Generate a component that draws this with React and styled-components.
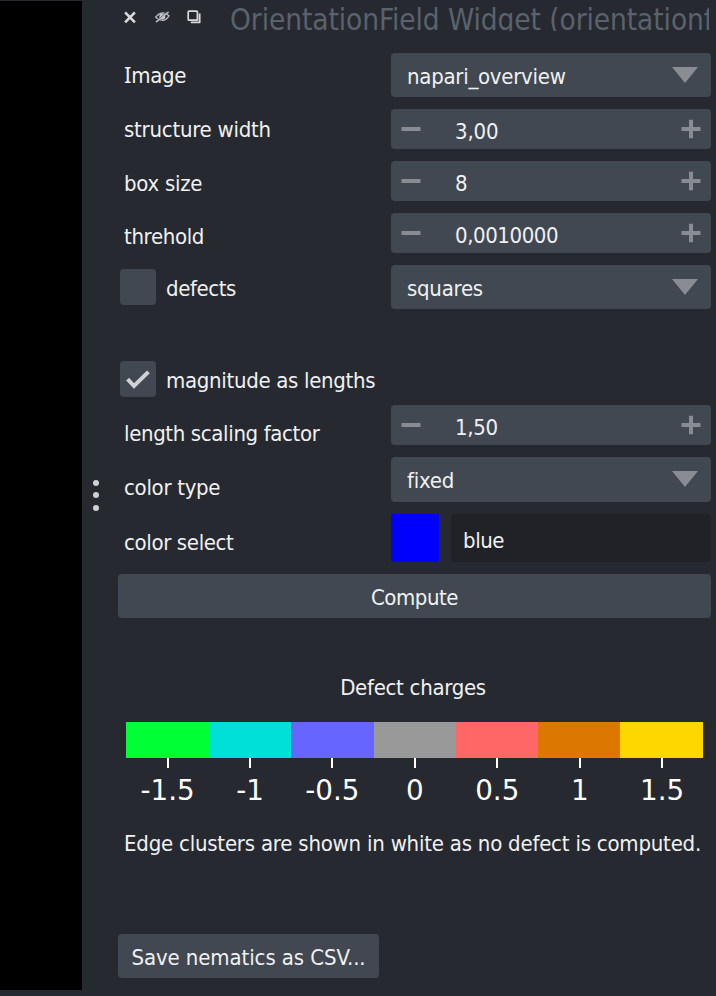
import React from 'react';
import styled, { createGlobalStyle } from 'styled-components';

const Global = createGlobalStyle`
  * { box-sizing: border-box; }
  body { margin: 0; background: #262930; overflow: hidden; }
`;

const Window = styled.div`
  display: flex;
  width: 716px;
  height: 996px;
  background: #262930;
  color: #f0f1f2;
  font-family: "DejaVu Sans Condensed", "DejaVu Sans", sans-serif;
  font-stretch: condensed;
  font-size: 22px;
  line-height: 32px;
  white-space: nowrap;
`;

const Canvas = styled.div`
  flex: 0 0 82px;
  margin: 1px 0 6px;
  background: #000;
`;

const Handle = styled.div`
  flex: 0 0 36px;
  padding: 479px 0 0 10px;
  svg { display: block; }
`;

const Dock = styled.main`
  width: 593px;
  display: flex;
  flex-direction: column;
`;

const TitleBar = styled.header`
  display: flex;
  height: 53px;
  padding-left: 5px;
  flex-shrink: 0;
`;

const TitleButtons = styled.div`
  display: flex;
  gap: 16px;
  padding-top: 9px;
  width: 107px;
  flex-shrink: 0;
  svg { display: block; }
`;

const Title = styled.h1`
  margin: 0;
  width: 479px;
  height: 31px;
  overflow: hidden;
  color: #5a626c;
  font-size: 29.5px;
  font-weight: 400;
  letter-spacing: -0.08px;
  line-height: 40px;
`;

const Form = styled.div`
  display: flex;
  flex-direction: column;
  gap: 12px;
  margin-bottom: ${(p) => p.$after || 0}px;
`;

const FormRow = styled.div`
  display: grid;
  grid-template-columns: 273px 320px;
  grid-template-rows: 100%;
  height: ${(p) => p.$h}px;
`;

const Text = styled.span`
  display: block;
  height: 30px;
  margin-top: ${(p) => p.$top || 0}px;
  letter-spacing: ${(p) => p.$ls || 0}px;
`;

const Label = styled(Text).attrs({ as: 'label' })`
  padding-left: 6px;
`;

const SerifCap = styled.span`
  font-family: "Noto Sans", sans-serif;
  line-height: 0;
`;

const Check = styled.div`
  display: flex;
  gap: 10px;
  padding-left: 2px;
`;

const CheckBox = styled.span`
  display: block;
  width: 36px;
  height: 36px;
  margin-top: ${(p) => p.$top || 0}px;
  border-radius: 4px;
  background: #414851;
  svg { display: block; }
`;

const Field = styled.div`
  display: flex;
  justify-content: space-between;
  border-radius: 4px;
  background: #414851;
`;

const ComboField = styled(Field)`
  padding: 0 13px 0 16px;
  svg { display: block; margin-top: 14px; }
`;

const SpinField = styled(Field)`
  padding: 0 10px;
  svg { display: block; margin-top: 10px; }
`;

const SpinValue = styled(Text)`
  flex: 1;
  padding-left: 34px;
`;

const ColorField = styled.div`
  display: flex;
  gap: 12px;
`;

const Swatch = styled.div`
  width: 48px;
  border-radius: 2px;
  background: #00f;
`;

const LineEdit = styled.div`
  flex: 1;
  padding-left: 12px;
  border-radius: 4px;
  background: #212227;
`;

const Button = styled.button`
  flex-shrink: 0;
  width: ${(p) => p.$w}px;
  height: 44px;
  padding: 0;
  border: 0;
  border-radius: 4px;
  background: #414851;
  color: inherit;
  font: inherit;
  display: flex;
  justify-content: center;
  align-items: flex-start;
`;

const Legend = styled.section`
  height: 316px;
  padding-top: 54px;
  display: flex;
  flex-direction: column;
  flex-shrink: 0;
`;

const LegendTitle = styled(Text)`
  text-align: center;
  padding-right: 3px;
`;

const Scale = styled.div`
  display: grid;
  grid-template-columns: 84px 81px 83px 82px 82px 82px 83px;
  margin: 20px 0 0 8px;
`;

const Band = styled.div`
  height: 36px;
  background: ${(p) => p.$c};
`;

const Ticks = styled.div`
  display: grid;
  grid-template-columns: repeat(7, 82.43px);
  height: 50px;
  margin-left: 8.4px;
`;

const Tick = styled.div`
  display: flex;
  flex-direction: column;
  align-items: center;
  color: #fff;
  font-family: "DejaVu Sans", sans-serif;
  font-stretch: normal;
  font-size: 27.78px;
  line-height: 46px;
  &::before {
    content: "";
    width: 2px;
    height: 10px;
    background: #fff;
  }
`;

const Note = styled(Text)`
  padding-left: 6px;
`;

const Arrow = () => (
  <svg width="26" height="16"><path d="M0 0H26L13 16Z" fill="#8a8c93" /></svg>
);
const Minus = () => (
  <svg width="20" height="20"><path d="M.5 8h19v4H.5z" fill="#8a8c93" /></svg>
);
const Plus = () => (
  <svg width="20" height="20"><path d="M.5 8H8V.7h4V8h7.5v4H12v7.3H8V12H.5z" fill="#8a8c93" /></svg>
);

const Combo = ({ top, ls, children }) => (
  <ComboField><Text $top={top} $ls={ls}>{children}</Text><Arrow /></ComboField>
);
const Spin = ({ ls, children }) => (
  <SpinField><Minus /><SpinValue $top={7} $ls={ls}>{children}</SpinValue><Plus /></SpinField>
);

const BANDS = [
  ['-1.5', '#00ff33'], ['-1', '#00e0d8'], ['-0.5', '#6666ff'], ['0', '#999999'],
  ['0.5', '#ff6666'], ['1', '#dc7700'], ['1.5', '#ffd700'],
];

export default function App() {
  return (
    <>
      <Global />
      <Window>
        <Canvas />
        <Handle>
          <svg width="8" height="34" fill="#d0d1d3">
            <circle cx="4" cy="4" r="3" /><circle cx="4" cy="16" r="3" /><circle cx="4" cy="29" r="3" />
          </svg>
        </Handle>
        <Dock>
          <TitleBar>
            <TitleButtons>
              <svg width="16" height="16" fill="none" stroke="#d8d9db" strokeWidth="2.6">
                <path d="M2.1 3.4 11.9 13.4M11.9 3.4 2.1 13.4" />
              </svg>
              <svg width="16" height="16" fill="none" stroke="#b9babe" strokeWidth="1.3">
                <path d="M.6 8.2Q7 .4 14 6.8Q8.4 15.2 .6 8.2Z" />
                <circle cx="7.3" cy="7.6" r="3" fill="#c8c9cc" stroke="none" />
                <path d="M1.2 12.2 12.6 2.6" stroke="#262930" strokeWidth="1" />
                <path d="M1 13.2 13.6 2.8" strokeWidth="1.6" />
              </svg>
              <svg width="16" height="16" fill="none" stroke="#d8d9db" strokeWidth="1.7">
                <rect x="1.2" y="2.2" width="9.2" height="9" rx=".8" />
                <path d="M12.6 4.4V13.4H3.8" strokeWidth="1.9" strokeLinejoin="round" />
              </svg>
            </TitleButtons>
            <Title>OrientationField Widget (orientationfield)</Title>
          </TitleBar>

          <Form $after={52}>
            <FormRow $h={44}>
              <Label $top={7} $ls={-0.3}><SerifCap>I</SerifCap>mage</Label>
              <Combo top={8} ls={-0.27}>napari_overview</Combo>
            </FormRow>
            <FormRow $h={40}>
              <Label $top={5} $ls={-0.25}>structure width</Label>
              <Spin ls={-0.15}>3,00</Spin>
            </FormRow>
            <FormRow $h={40}>
              <Label $top={7} $ls={-0.27}>box size</Label>
              <Spin>8</Spin>
            </FormRow>
            <FormRow $h={40}>
              <Label $top={8} $ls={-0.35}>threhold</Label>
              <Spin ls={-0.43}>0,0010000</Spin>
            </FormRow>
            <FormRow $h={44}>
              <Check><CheckBox $top={4} /><Text $top={8} $ls={-0.41}>defects</Text></Check>
              <Combo top={8} ls={-0.26}>squares</Combo>
            </FormRow>
          </Form>

          <Form $after={8}>
            <FormRow $h={36}>
              <Check>
                <CheckBox>
                  <svg width="36" height="36" fill="none" stroke="#d0d1d3" strokeWidth="4">
                    <path d="M7.6 18.2 14 25 28.4 10.8" />
                  </svg>
                </CheckBox>
                <Text $top={4} $ls={-0.31}>magnitude as lengths</Text>
              </Check>
            </FormRow>
          </Form>

          <Form>
            <FormRow $h={40}>
              <Label $top={13} $ls={-0.36}>length scaling factor</Label>
              <Spin ls={-0.29}>1,50</Spin>
            </FormRow>
            <FormRow $h={45}>
              <Label $top={15} $ls={-0.3}>color type</Label>
              <Combo top={8} ls={-0.22}>fixed</Combo>
            </FormRow>
            <FormRow $h={48}>
              <Label $top={13} $ls={-0.36}>color select</Label>
              <ColorField>
                <Swatch />
                <LineEdit><Text $top={11} $ls={-0.44}>blue</Text></LineEdit>
              </ColorField>
            </FormRow>
            <Button $w={593}><Text $top={8} $ls={-0.46}>Compute</Text></Button>
          </Form>

          <Legend>
            <LegendTitle $ls={-0.3}>Defect charges</LegendTitle>
            <Scale>{BANDS.map(([n, c]) => <Band key={n} $c={c} />)}</Scale>
            <Ticks>{BANDS.map(([n]) => <Tick key={n}>{n}</Tick>)}</Ticks>
            <Note $top={20} $ls={-0.22}>Edge clusters are shown in white as no defect is computed.</Note>
          </Legend>
          <Button $w={261}><Text $top={8} $ls={-0.1}>Save nematics as CSV...</Text></Button>
        </Dock>
      </Window>
    </>
  );
}
